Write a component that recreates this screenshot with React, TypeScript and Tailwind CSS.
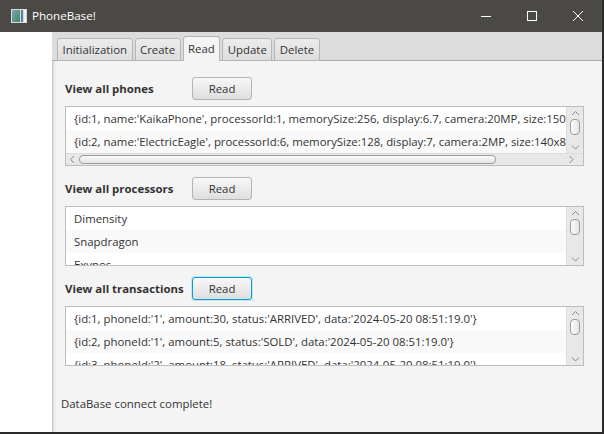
import React from "react";

const font = { fontFamily: '"Open Sans", "Noto Sans", sans-serif' };

const phones = [
    "{id:1, name:'KaikaPhone', processorId:1, memorySize:256, display:6.7, camera:20MP, size:150x70x10}",
    "{id:2, name:'ElectricEagle', processorId:6, memorySize:128, display:7, camera:2MP, size:140x80x12}",
];

const processors = ["Dimensity", "Snapdragon", "Exynos"];

const transactions = [
    "{id:1, phoneId:'1', amount:30, status:'ARRIVED', data:'2024-05-20 08:51:19.0'}",
    "{id:2, phoneId:'1', amount:5, status:'SOLD', data:'2024-05-20 08:51:19.0'}",
    "{id:3, phoneId:'2', amount:18, status:'ARRIVED', data:'2024-05-20 08:51:19.0'}",
];

const tabs = ["Initialization", "Create", "Read", "Update", "Delete"];

function Chevron({ dir }: { dir: "up" | "down" | "left" | "right" }) {
    const d = {
        up: "M1 5 L4.5 1.5 L8 5",
        down: "M1 1.5 L4.5 5 L8 1.5",
        left: "M5 1 L1.5 4.5 L5 8",
        right: "M1.5 1 L5 4.5 L1.5 8",
    }[dir];
    const vertical = dir === "up" || dir === "down";
    return (
        <svg
            width={vertical ? 9 : 7}
            height={vertical ? 7 : 9}
            viewBox={vertical ? "0 0 9 7" : "0 0 7 9"}
            className="shrink-0"
        >
            <path d={d} fill="none" stroke="#8a8a8a" strokeWidth="1" />
        </svg>
    );
}

function VScroll() {
    return (
        <div className="flex w-[17px] shrink-0 flex-col items-center border-l border-[#dcdcdc] bg-[#e8e8e8] pt-[3px] pb-[2px]">
            <Chevron dir="up" />
            <div className="mt-[2px] h-[16px] w-[10px] rounded-[4px] border border-[#9c9c9c] bg-gradient-to-r from-[#fbfbfb] to-[#e4e4e4]" />
            <div className="flex-1" />
            <Chevron dir="down" />
        </div>
    );
}

function ListBox({
    items,
    hscroll = false,
}: {
    items: string[];
    hscroll?: boolean;
}) {
    return (
        <div className="flex h-[60px] w-full min-w-0 flex-col overflow-hidden border border-[#bdbdbd] bg-white">
            <div className="flex min-h-0 flex-1">
                <div className="min-w-0 flex-1 overflow-hidden">
                    {items.map((item, i) => (
                        <div
                            key={item}
                            className={`h-[23px] shrink-0 overflow-hidden whitespace-nowrap pl-[8px] text-[11.4px] leading-[23px] text-[#333333] ${
                                i % 2 === 1 ? "bg-[#f9f9f9]" : "bg-white"
                            }`}
                        >
                            {item}
                        </div>
                    ))}
                </div>
                <VScroll />
            </div>
            {hscroll && (
                <div className="flex h-[12px] shrink-0 items-center border-t border-[#dcdcdc] bg-[#e8e8e8] pl-[3px] pr-[8px]">
                    <Chevron dir="left" />
                    <div className="ml-[3px] h-[9px] w-[417px] rounded-[4px] border border-[#9c9c9c] bg-gradient-to-b from-[#fbfbfb] to-[#e4e4e4]" />
                    <div className="flex-1" />
                    <Chevron dir="right" />
                </div>
            )}
        </div>
    );
}

function ReadButton({ focused = false }: { focused?: boolean }) {
    return (
        <button
            className={`h-[23px] w-[60px] rounded-[3px] border bg-gradient-to-b from-[#f8f8f8] to-[#dedede] text-[11.4px] text-[#333333] ${
                focused
                    ? "border-[#039ed3] shadow-[0_0_0_1px_#bfe6f4]"
                    : "border-[#b4b4b4]"
            }`}
            style={font}
        >
            Read
        </button>
    );
}

function Section({
    title,
    items,
    hscroll,
    focused,
}: {
    title: string;
    items: string[];
    hscroll?: boolean;
    focused?: boolean;
}) {
    return (
        <div className="flex min-w-0 flex-col gap-[6px]">
            <div className="flex items-center">
                <span className="w-[127px] text-[11.4px] font-bold text-[#333333]">{title}</span>
                <ReadButton focused={focused} />
            </div>
            <ListBox items={items} hscroll={hscroll} />
        </div>
    );
}

export default function App() {
    return (
        <div
            className="flex h-[434px] w-[604px] flex-col overflow-hidden border-r-2 border-b-2 border-[#2b2b2b] bg-[#4a4946]"
            style={font}
        >
            {/* title bar */}
            <div className="flex h-[32px] shrink-0 items-center bg-[#4a4946] text-white">
                <svg width="16" height="14" viewBox="0 0 16 14" className="ml-[11px]">
                    <defs>
                        <linearGradient id="ic" x1="0" y1="0" x2="1" y2="1">
                            <stop offset="0" stopColor="#7fa3b8" />
                            <stop offset="1" stopColor="#3f8a5a" />
                        </linearGradient>
                    </defs>
                    <rect x="0" y="0" width="16" height="14" fill="#d9dde0" />
                    <rect x="1" y="1" width="8" height="12" fill="url(#ic)" />
                    <rect x="10" y="1" width="2" height="12" fill="#5d7ea6" />
                    <rect x="13" y="1" width="2" height="12" fill="#f2f2f2" />
                </svg>
                <span className="ml-[5px] text-[11.6px]">PhoneBase!</span>
                <div className="flex-1" />
                <svg width="10" height="10" viewBox="0 0 10 10" className="mr-[36px]">
                    <path d="M0 5.5 H10" stroke="white" strokeWidth="1" />
                </svg>
                <svg width="10" height="10" viewBox="0 0 10 10" className="mr-[36px]">
                    <rect x="0.5" y="0.5" width="9" height="9" fill="none" stroke="white" strokeWidth="1" />
                </svg>
                <svg width="10" height="10" viewBox="0 0 10 10" className="mr-[19px]">
                    <path d="M0 0 L10 10 M10 0 L0 10" stroke="white" strokeWidth="1" />
                </svg>
            </div>

            <div className="flex min-h-0 flex-1">
                <div className="w-[52px] shrink-0 bg-white" />
                <div className="flex min-w-0 flex-1 flex-col bg-[#f4f4f4] shadow-[inset_3px_0_3px_-2px_rgba(0,0,0,0.25)]">
                    {/* tab header */}
                    <div className="flex h-[29px] shrink-0 items-end gap-[2px] border-b border-[#ababab] bg-[#dcdcdc] pl-[5px]">
                        {tabs.map((tab) => {
                            const active = tab === "Read";
                            return (
                                <div
                                    key={tab}
                                    className={`-mb-px flex items-center rounded-t-[3px] border border-[#b5b5b5] px-[4.5px] text-[11.4px] text-[#333333] ${
                                        active
                                            ? "h-[25px] border-b-[#f4f4f4] bg-[#f4f4f4]"
                                            : "h-[23px] bg-gradient-to-b from-[#ececec] to-[#dedede]"
                                    }`}
                                >
                                    {tab}
                                </div>
                            );
                        })}
                    </div>

                    {/* content */}
                    <div className="flex min-w-0 flex-col gap-[11px] pt-[16px] pl-[13px] pr-[18px]">
                        <Section title="View all phones" items={phones} hscroll />
                        <Section title="View all processors" items={processors} />
                        <Section title="View all transactions" items={transactions} focused />
                    </div>

                    <div className="mt-[29px] pl-[9px] text-[11.4px] text-[#333333]">
                        DataBase connect complete!
                    </div>
                </div>
            </div>
        </div>
    );
}
